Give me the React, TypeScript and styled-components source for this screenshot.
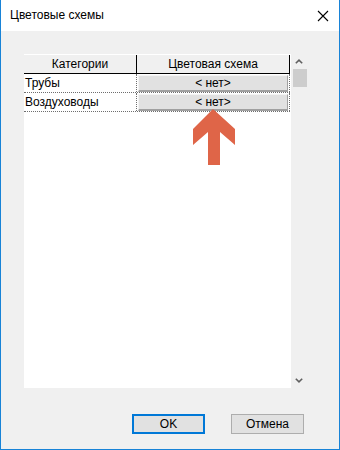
import React from "react";
import styled, { createGlobalStyle } from "styled-components";

const Global = createGlobalStyle`
  html, body { margin: 0; padding: 0; background: #ffffff; }
  body { font-family: "Liberation Sans", Arial, sans-serif; font-size: 12px; color: #000; }
`;

const Window = styled.div`
  width: 340px;
  height: 450px;
  box-sizing: border-box;
  border: 1px solid #1883d7;
  border-top: none;
  display: flex;
  flex-direction: column;
  background: #f0f0f0;
`;

const TitleBar = styled.div`
  height: 31px;
  flex: none;
  background: #ffffff;
  display: flex;
  align-items: center;
  justify-content: space-between;
  padding: 0 10px 0 9px;
`;

const Title = styled.span`
  font-size: 12px;
  color: #000;
  margin-top: -1px;
`;

const Body = styled.div`
  flex: 1;
  display: flex;
  flex-direction: column;
  padding: 23px 0 0 23px;
`;

const GridBox = styled.div`
  position: relative;
  width: 283px;
  height: 334px;
  display: flex;
  background: #ffffff;
`;

const Table = styled.div`
  width: 266px;
  display: flex;
  flex-direction: column;
`;

const HeaderRow = styled.div`
  display: grid;
  grid-template-columns: 113px 153px;
  height: 20px;
  box-sizing: border-box;
  border-bottom: 1px solid #000;
  border-top: 1px solid #ffffff;
  background: #f0f0f0;
`;

const HeaderCell = styled.div`
  display: flex;
  align-items: center;
  justify-content: center;
  border-right: 1px solid #000;
  color: #000;
`;

const Row = styled.div`
  display: grid;
  grid-template-columns: 113px 153px;
  height: 19px;
  box-sizing: border-box;
  border-bottom: 1px dotted #6e6e6e;
`;

const NameCell = styled.div`
  display: flex;
  align-items: center;
  padding-left: 1px;
  border-right: 1px dotted #6e6e6e;
`;

const SchemeCell = styled.div`
  padding: 1px 1px 0 1px;
  border-right: 1px dotted #6e6e6e;
  display: flex;
`;

const CellButton = styled.div`
  flex: 1;
  box-sizing: border-box;
  background: #e1e1e1;
  border-top: 1px solid #f4f4f4;
  border-left: 1px solid #f4f4f4;
  border-right: 1px solid #a0a0a0;
  border-bottom: 2px solid #a0a0a0;
  display: flex;
  align-items: center;
  justify-content: center;
  font-size: 12px;
  line-height: 1;
`;

const ScrollBar = styled.div`
  width: 17px;
  background: #f0f0f0;
  border-left: 1px solid #ffffff;
  box-sizing: border-box;
  display: flex;
  flex-direction: column;
  align-items: center;
`;

const ScrollArrow = styled.div`
  height: 15px;
  width: 100%;
  display: flex;
  align-items: center;
  justify-content: center;
`;

const Thumb = styled.div`
  width: 14px;
  height: 18px;
  margin-left: 1px;
  background: #cdcdcd;
`;

const Spacer = styled.div`
  flex: 1;
`;

const ArrowOverlay = styled.svg`
  position: absolute;
  left: 169px;
  top: 55px;
`;

const Footer = styled.div`
  display: flex;
  justify-content: flex-end;
  gap: 26px;
  padding: 26px 35px 0 0;
`;

const Button = styled.button<{ $primary?: boolean }>`
  width: 73px;
  height: 20px;
  box-sizing: border-box;
  background: #e1e1e1;
  border: ${(p) => (p.$primary ? "2px solid #0078d7" : "1px solid #adadad")};
  font-family: "Liberation Sans", Arial, sans-serif;
  font-size: 12px;
  color: #000;
  padding: 0;
  display: flex;
  align-items: center;
  justify-content: center;
`;

export default function App() {
  return (
    <>
      <Global />
      <Window>
        <TitleBar>
          <Title>Цветовые схемы</Title>
          <svg width="12" height="12" viewBox="0 0 12 12">
            <path d="M1 1 L11 11 M11 1 L1 11" stroke="#000" strokeWidth="1.1" />
          </svg>
        </TitleBar>
        <Body>
          <GridBox>
            <Table>
              <HeaderRow>
                <HeaderCell>Категории</HeaderCell>
                <HeaderCell>Цветовая схема</HeaderCell>
              </HeaderRow>
              <Row>
                <NameCell>Трубы</NameCell>
                <SchemeCell>
                  <CellButton>&lt; нет&gt;</CellButton>
                </SchemeCell>
              </Row>
              <Row>
                <NameCell>Воздуховоды</NameCell>
                <SchemeCell>
                  <CellButton>&lt; нет&gt;</CellButton>
                </SchemeCell>
              </Row>
            </Table>
            <ScrollBar>
              <ScrollArrow>
                <svg width="8" height="5" viewBox="0 0 8 5">
                  <path d="M0.8 4.3 L4 1.2 L7.2 4.3" stroke="#606060" strokeWidth="1.6" fill="none" />
                </svg>
              </ScrollArrow>
              <Thumb />
              <Spacer />
              <ScrollArrow>
                <svg width="8" height="5" viewBox="0 0 8 5">
                  <path d="M0.8 0.7 L4 3.8 L7.2 0.7" stroke="#606060" strokeWidth="1.6" fill="none" />
                </svg>
              </ScrollArrow>
            </ScrollBar>
            <ArrowOverlay width="43" height="57" viewBox="0 0 43 57">
              <path
                d="M20 0 L42 20 L42 36 L27 23 L27 56 L15 56 L15 23 L0 36 L0 20 Z"
                fill="#df6548"
              />
            </ArrowOverlay>
          </GridBox>
          <Footer>
            <Button $primary>OK</Button>
            <Button>Отмена</Button>
          </Footer>
        </Body>
      </Window>
    </>
  );
}
